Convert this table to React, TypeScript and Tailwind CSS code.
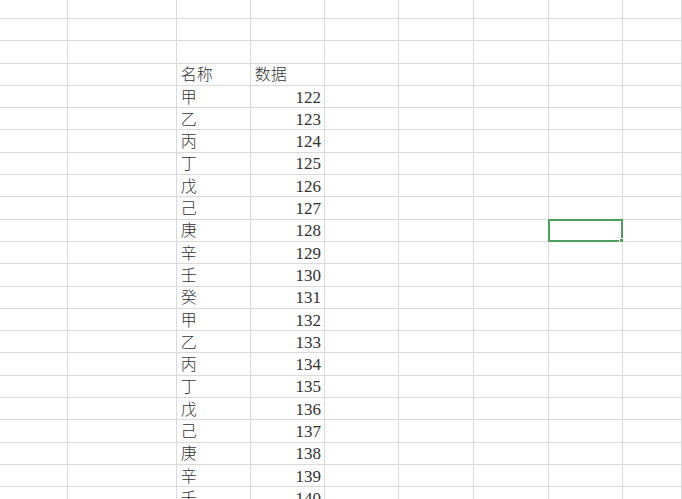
import React from "react";

const names = ["甲", "乙", "丙", "丁", "戊", "己", "庚", "辛", "壬", "癸"];

// rows of the sheet: [name, value] for the data block, null for empty rows
const rows: (null | [string, string])[] = [null, null, null, ["名称", "数据"]];
for (let i = 0; i < 19; i++) {
  rows.push([names[i % 10], String(122 + i)]);
}

const COLS = 9;

export default function App() {
  return (
    <div className="w-[682px] h-[499px] overflow-hidden bg-white text-[#333] font-['Liberation_Serif','Noto_Sans_CJK_SC',serif] text-[16px]">
      <div className="grid grid-cols-[68.3px_108.4px_74.1px_74.3px_74.3px_74.7px_74.7px_74.3px_1fr]">
        {rows.map((row, r) => {
          const height = r === 0 ? "h-[19px]" : "h-[22.3px]";
          return Array.from({ length: COLS }).map((_, c) => {
            const selected = r === 10 && c === 7;
            let content: React.ReactNode = null;
            if (row && c === 2) content = <span className="font-light">{row[0]}</span>;
            if (row && c === 3)
              content =
                r === 3 ? (
                  <span className="font-light">{row[1]}</span>
                ) : (
                  <span className="text-[17px]">{row[1]}</span>
                );
            return (
              <div
                key={r + "-" + c}
                className={
                  height +
                  " relative flex items-center pt-[2px] leading-[18px] whitespace-nowrap border-r border-b border-[#dadada] " +
                  (c === 3 && r > 3 ? "justify-end pr-[3px]" : "pl-[4px]")
                }
              >
                {content}
                {selected && (
                  <div className="absolute -left-[1px] -top-[1px] -right-[1px] -bottom-[1px] border-2 border-[#4e9f5e]">
                    <div className="absolute -right-[3px] -bottom-[3px] w-[5px] h-[5px] bg-[#4e9f5e] border border-white" />
                  </div>
                )}
              </div>
            );
          });
        })}
      </div>
    </div>
  );
}
